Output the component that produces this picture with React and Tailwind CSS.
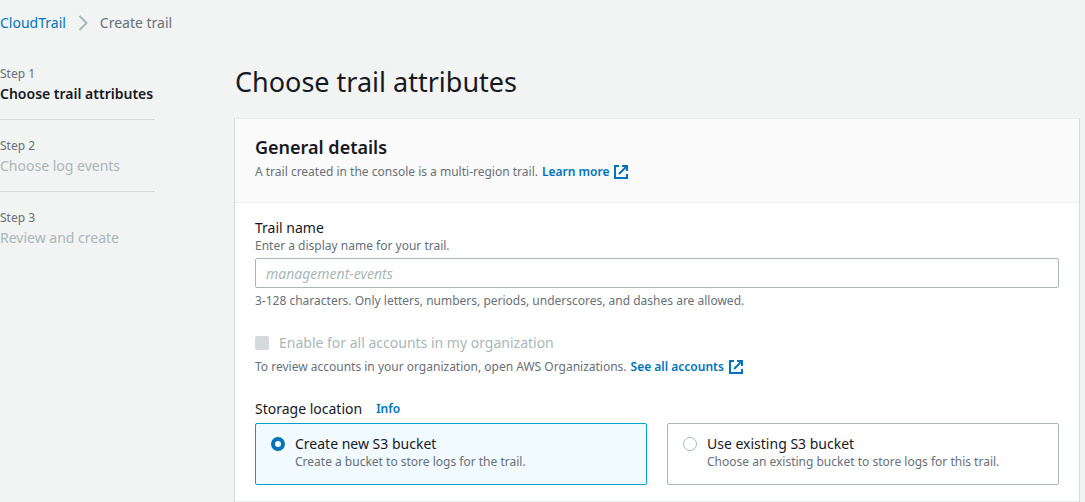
import React, { useState } from 'react';

const steps = ['Choose trail attributes', 'Choose log events', 'Review and create'];

const storageOptions = [
  {
    id: 'new',
    label: 'Create new S3 bucket',
    description: 'Create a bucket to store logs for the trail.',
  },
  {
    id: 'existing',
    label: 'Use existing S3 bucket',
    description: 'Choose an existing bucket to store logs for this trail.',
  },
];

function ExternalIcon() {
  return (
    <svg viewBox="0 0 16 16" className="w-4 h-4 shrink-0" fill="none" stroke="currentColor" strokeWidth="2" aria-hidden="true">
      <path d="M6 2H2v12h12v-4" />
      <path d="M9 2h5v5" />
      <path d="M13.5 2.5L6 10" />
    </svg>
  );
}

function ExternalLink({ children }) {
  return (
    <a href="#" className="inline-flex items-center gap-1 font-semibold text-[#0073bb]">
      {children}
      <ExternalIcon />
    </a>
  );
}

function Breadcrumbs() {
  return (
    <nav aria-label="Breadcrumbs" className="flex items-center gap-3 h-5 mt-[13px]">
      <a href="#" className="text-[#0073bb]">CloudTrail</a>
      <svg viewBox="0 0 10 16" className="w-[10px] h-4" fill="none" stroke="#aab7b8" strokeWidth="2" aria-hidden="true">
        <path d="M1.5 1l7 7-7 7" />
      </svg>
      <span className="text-[#687078]">Create trail</span>
    </nav>
  );
}

function StepList({ current }) {
  return (
    <ol className="w-[155px] shrink-0">
      {steps.map((step, i) => (
        <li
          key={step}
          className={i < steps.length - 1 ? 'border-b border-[#d5dbdb] pb-[15px] mb-4' : ''}
        >
          <div className="text-[12px] leading-5 text-[#687078]">Step {i + 1}</div>
          <div
            className={`whitespace-nowrap ${
              i === current ? 'font-semibold text-[#16191f]' : 'text-[#aab7b8]'
            }`}
          >
            {step}
          </div>
        </li>
      ))}
    </ol>
  );
}

function StorageTile({ option, checked, onSelect }) {
  return (
    <label
      className={`flex-1 flex gap-[10px] h-[62px] px-[15px] pt-[10px] border rounded-[2px] ${
        checked ? 'bg-[#f1faff] border-[#00a1c9]' : 'bg-white border-[#aab7b8]'
      }`}
    >
      <input
        type="radio"
        name="storage"
        checked={checked}
        onChange={() => onSelect(option.id)}
        className="appearance-none w-[14px] h-[14px] mt-[3px] shrink-0 rounded-full bg-white border border-[#aab7b8] checked:border-4 checked:border-[#0073bb]"
      />
      <span>
        <span className="block text-[#16191f]">{option.label}</span>
        <span className="block text-[12px] leading-4 text-[#687078]">{option.description}</span>
      </span>
    </label>
  );
}

export default function App() {
  const [name, setName] = useState('');
  const [storage, setStorage] = useState('new');

  return (
    <div className="min-h-screen flex flex-col bg-[#f2f3f3] text-[14px] leading-5 text-[#16191f] font-['Noto_Sans',sans-serif]">
      <Breadcrumbs />

      <div className="flex-1 flex gap-20 pt-[31px] pr-[6px]">
        <StepList current={0} />

        <main className="flex-1">
          <h1 className="text-[27px] leading-9">Choose trail attributes</h1>

          <section className="mt-[18px] bg-white border-y border-[#eaeded] shadow-[-1px_0_0_0_#d5dbdb,1px_0_0_0_#d5dbdb]">
            <header className="bg-[#fafafa] border-b border-[#eaeded] px-5 pt-4 pb-[18px]">
              <h2 className="text-[18px] leading-[25px] font-semibold">General details</h2>
              <p className="flex items-center gap-1 text-[12px] leading-6 text-[#687078]">
                A trail created in the console is a multi-region trail.
                <ExternalLink>Learn more</ExternalLink>
              </p>
            </header>

            <div className="px-5 pt-[15px] pb-4">
              <label htmlFor="trail-name" className="block">Trail name</label>
              <p className="text-[12px] leading-4 text-[#687078]">Enter a display name for your trail.</p>
              <input
                id="trail-name"
                type="text"
                value={name}
                onChange={(e) => setName(e.target.value)}
                placeholder="management-events"
                className="block w-full h-[30px] mt-1 px-[10px] bg-white border border-[#aab7b8] rounded-[2px] placeholder:italic placeholder:text-[#aab7b8]"
              />
              <p className="mt-[5px] text-[12px] leading-4 text-[#687078]">
                3-128 characters. Only letters, numbers, periods, underscores, and dashes are allowed.
              </p>

              <label className="flex items-center gap-[10px] mt-6 text-[#aab7b8]">
                <input
                  type="checkbox"
                  disabled
                  className="appearance-none w-[14px] h-[14px] rounded-[2px] bg-[#d5dbdb]"
                />
                Enable for all accounts in my organization
              </label>
              <p className="flex items-center gap-1 mt-1 text-[12px] leading-5 text-[#687078]">
                To review accounts in your organization, open AWS Organizations.
                <ExternalLink>See all accounts</ExternalLink>
              </p>

              <fieldset className="mt-[22px]">
                <legend className="flex items-center gap-[14px]">
                  Storage location
                  <a href="#" className="text-[12px] font-semibold text-[#0073bb]">Info</a>
                </legend>
                <div className="flex gap-5 mt-1">
                  {storageOptions.map((option) => (
                    <StorageTile
                      key={option.id}
                      option={option}
                      checked={storage === option.id}
                      onSelect={setStorage}
                    />
                  ))}
                </div>
              </fieldset>
            </div>
          </section>
        </main>
      </div>
    </div>
  );
}
